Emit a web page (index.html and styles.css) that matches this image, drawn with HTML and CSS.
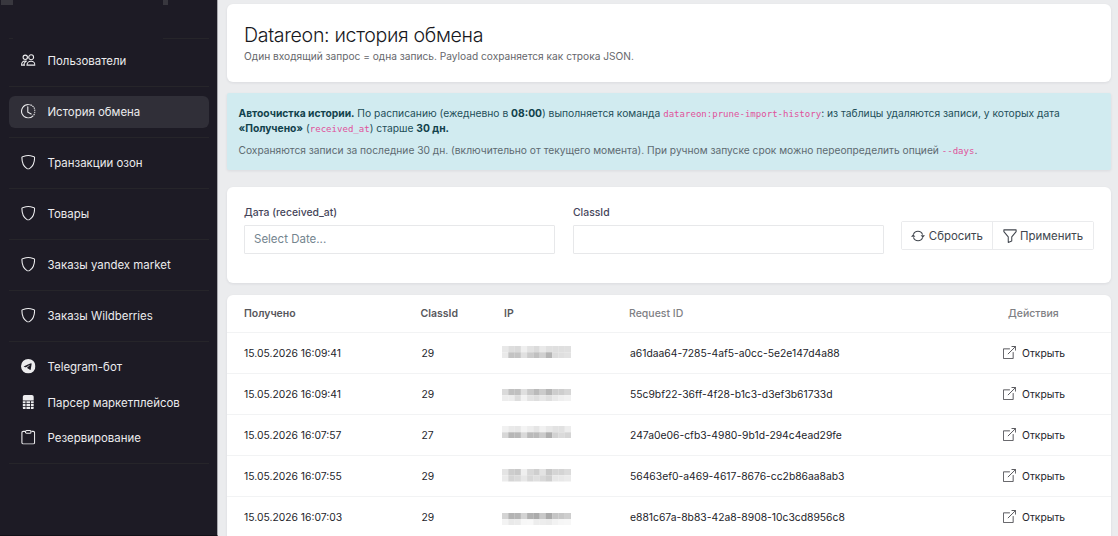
FILE: index.html
```html
<!DOCTYPE html>
<html lang="ru">
<head>
<meta charset="utf-8">
<title>Datareon: история обмена</title>
<link rel="stylesheet" href="styles.css">
</head>
<body>
<svg class="sprite" aria-hidden="true">
  <symbol id="people" viewBox="0 0 16 16"><g fill="none" stroke="currentColor" stroke-width="1.200"><circle cx="4.700" cy="4.700" r="2.400"/><circle cx="11.200" cy="4.700" r="2.700"/><path d="M6.600 13.400h8.800c0-2.600-1.600-4.300-4.300-4.300s-4.500 1.700-4.500 4.300zM6.400 9.200C5.900 8.900 5.300 8.800 4.700 8.800 2 8.800.6 10.800.6 13.400h3.800M3 13.400c.2-2 1.200-3.600 2.900-4.400"/></g></symbol>
  <symbol id="clock" viewBox="0 0 16 16"><g fill="none" stroke="currentColor" stroke-width="1.200"><path d="M8 .6a7.400 7.400 0 1 0 5.300 12.600"/><path d="M8 .6a7.400 7.400 0 0 1 5.300 12.600" stroke-dasharray="1.600 .8"/><path d="M7.500 3v6l3.700 2.100" stroke-linecap="round"/></g></symbol>
  <symbol id="shield" viewBox="0 0 16 16"><path d="M8 .6C6.500.6 3.500 1.400 1.600 2c-.4.100-.6.400-.6.800 0 5 .6 9.200 5.600 12.200.6.400 1 .5 1.400.5s.8-.1 1.400-.5C14.400 12 15 7.800 15 2.800c0-.4-.2-.7-.6-.8C12.500 1.400 9.500.6 8 .6z" fill="none" stroke="currentColor" stroke-width="1.200"/></symbol>
  <symbol id="telegram" viewBox="0 0 16 16"><path fill="currentColor" fill-rule="evenodd" d="M16 8A8 8 0 1 1 0 8a8 8 0 0 1 16 0zM8.287 5.906c-.778.324-2.334.994-4.666 2.010-.378.150-.577.298-.595.442-.030.243.275.339.690.470l.175.055c.408.133.958.288 1.243.294.260.006.549-.100.868-.320 2.179-1.471 3.304-2.214 3.374-2.230.050-.012.120-.026.166.016.047.041.042.120.037.141-.030.129-1.227 1.241-1.846 1.817-.193.180-.330.307-.358.336a8 8 0 0 1-.188.186c-.380.366-.664.640.015 1.088.327.216.589.393.850.571.284.194.568.387.936.629.093.060.183.125.270.187.331.236.630.448.997.414.214-.020.435-.220.547-.820.265-1.417.786-4.486.906-5.751a1.400 1.400 0 0 0-.013-.315.340.340 0 0 0-.114-.217.530.530 0 0 0-.310-.093c-.300.005-.763.166-2.984 1.090"/></symbol>
  <symbol id="calc" viewBox="0 0 16 16"><path fill="currentColor" d="M4 0h8a2 2 0 0 1 2 2v4H2V2a2 2 0 0 1 2-2zM2 7h3v2H2zm4 0h4v2H6zm5 0h3v2h-3zM2 10h3v2H2zm4 0h4v2H6zm5 0h3v2h-3zM2 13h3v3H4a2 2 0 0 1-2-2zm4 0h4v3H6zm5 0h3v1a2 2 0 0 1-2 2h-1z"/></symbol>
  <symbol id="clipboard" viewBox="0 0 16 16"><g fill="none" stroke="currentColor" stroke-width="1.200"><path d="M4.500 1.500h-2A1.500 1.500 0 0 0 1 3v11a1.500 1.500 0 0 0 1.500 1.400h11A1.500 1.500 0 0 0 15 14V3a1.500 1.500 0 0 0-1.500-1.500h-2"/><rect x="5" y=".6" width="6" height="3" rx="1.200"/></g></symbol>
  <symbol id="refresh" viewBox="0 0 16 16"><path d="M2.700 6.500a5.500 5.500 0 0 1 10.500 0M13.300 9.500a5.500 5.500 0 0 1-10.500 0" fill="none" stroke="currentColor" stroke-width="1.200"/><path fill="currentColor" d="M11 7.200h5L13.500 10zM0 8.800h5L2.500 6z"/></symbol>
  <symbol id="funnel" viewBox="0 0 16 16"><path d="M1 1h14v2L10 9v4.800L6 15.300V9L1 3z" fill="none" stroke="currentColor" stroke-width="1.200" stroke-linejoin="round"/></symbol>
  <symbol id="open" viewBox="0 0 16 16"><path d="M8.500 3.500h-8v12h12v-8M10.500.6h5v5M15.500.6L6 10" fill="none" stroke="currentColor" stroke-width="1.200"/></symbol>
</svg>
<div class="app">
  <aside class="sidebar">
    <div class="brand"><i class="chip"></i><i class="chip chip-small"></i></div>
    <nav class="nav">
      <a class="item"><svg class="icon"><use href="#people"/></svg>Пользователи</a>
      <hr class="rule">
      <a class="item active"><svg class="icon"><use href="#clock"/></svg>История обмена</a>
      <hr class="rule">
      <a class="item"><svg class="icon"><use href="#shield"/></svg>Транзакции озон</a>
      <hr class="rule">
      <a class="item"><svg class="icon"><use href="#shield"/></svg>Товары</a>
      <hr class="rule">
      <a class="item"><svg class="icon"><use href="#shield"/></svg>Заказы yandex market</a>
      <hr class="rule">
      <a class="item"><svg class="icon"><use href="#shield"/></svg>Заказы Wildberries</a>
      <hr class="rule">
      <a class="item tight"><svg class="icon"><use href="#telegram"/></svg>Telegram-бот</a>
      <a class="item tight"><svg class="icon"><use href="#calc"/></svg>Парсер маркетплейсов</a>
      <a class="item"><svg class="icon"><use href="#clipboard"/></svg>Резервирование</a>
      <hr class="rule">
    </nav>
  </aside>
  <main class="main">
    <header class="card heading">
      <h1 class="title">Datareon: история обмена</h1>
      <p class="lead">Один входящий запрос = одна запись. Payload сохраняется как строка JSON.</p>
    </header>
    <section class="alert">
      <p class="alert-text"><b>Автоочистка истории.</b> По расписанию (ежедневно в <b>08:00</b>) выполняется команда <code>datareon:prune-import-history</code>: из таблицы удаляются записи, у которых дата<br><b>«Получено»</b> (<code>received_at</code>) старше <b>30 дн.</b></p>
      <p class="alert-note">Сохраняются записи за последние 30 дн. (включительно от текущего момента). При ручном запуске срок можно переопределить опцией <code>--days</code>.</p>
    </section>
    <form class="card filters">
      <label class="field"><span class="label">Дата (received_at)</span><input class="input" placeholder="Select Date..."></label>
      <label class="field"><span class="label">ClassId</span><input class="input"></label>
      <div class="buttons">
        <button class="btn btn-reset" type="button"><svg class="btn-icon"><use href="#refresh"/></svg>Сбросить</button>
        <button class="btn" type="button"><svg class="btn-icon"><use href="#funnel"/></svg>Применить</button>
      </div>
    </form>
    <section class="card table">
      <div class="row head"><span>Получено</span><span class="cls">ClassId</span><span class="iph">IP</span><span class="muted req">Request ID</span><span class="muted act">Действия</span></div>
      <div class="row"><span>15.05.2026 16:09:41</span><span>29</span><svg class="ip ip1" viewBox="0 0 11 2" preserveAspectRatio="none" data-cells="e8dddaefe2dbe9e0dfdfe0 eac3c4e0cbc0d0b4dcdfe2"></svg><span class="uuid">a61daa64-7285-4af5-a0cc-5e2e147d4a88</span><a class="open"><svg class="open-icon"><use href="#open"/></svg>Открыть</a></div>
      <div class="row"><span>15.05.2026 16:09:41</span><span>29</span><svg class="ip ip2" viewBox="0 0 11 2" preserveAspectRatio="none" data-cells="dac0c0dfc9bacbb6cdced6 ededddf2e3dee7dfe9eff2"></svg><span class="uuid">55c9bf22-36ff-4f28-b1c3-d3ef3b61733d</span><a class="open"><svg class="open-icon"><use href="#open"/></svg>Открыть</a></div>
      <div class="row"><span>15.05.2026 16:07:57</span><span>27</span><svg class="ip ip3" viewBox="0 0 11 2" preserveAspectRatio="none" data-cells="f1e9e7f4ede5f1e8e2e1ed d7b6b8d9babacbaed2dad5"></svg><span class="uuid">247a0e06-cfb3-4980-9b1d-294c4ead29fe</span><a class="open"><svg class="open-icon"><use href="#open"/></svg>Открыть</a></div>
      <div class="row"><span>15.05.2026 16:07:55</span><span>29</span><svg class="ip ip4" viewBox="0 0 11 2" preserveAspectRatio="none" data-cells="e4cdc9efd8cfe3c8d5d4db ebd5dae7d8dfd8cfe7e8eb"></svg><span class="uuid">56463ef0-a469-4617-8676-cc2b86aa8ab3</span><a class="open"><svg class="open-icon"><use href="#open"/></svg>Открыть</a></div>
      <div class="row"><span>15.05.2026 16:07:03</span><span>29</span><svg class="ip ip5" viewBox="0 0 11 2" preserveAspectRatio="none" data-cells="d4b3b5d3b1abc9aac5c7ce f3e9ebf7f8ededebf2f6f7"></svg><span class="uuid">e881c67a-8b83-42a8-8908-10c3cd8956c8</span><a class="open"><svg class="open-icon"><use href="#open"/></svg>Открыть</a></div>
    </section>
  </main>
</div>
<script src="mask.js"></script>
</body>
</html>
```
FILE: styles.css
```css
* { box-sizing: border-box; }
body { margin: 0; background: #ebecee; font-family: Inter, "Noto Sans", sans-serif; color: #23242a; }
.sprite { position: absolute; width: 0; height: 0; }
.app { display: flex; width: 1118px; height: 536px; overflow: hidden; }
.sidebar { flex: none; width: 218px; height: 536px; background: #1d1b25; border-right: 1px solid #a9a9ae; border-bottom: 1px solid #121118; }
.brand { display: flex; height: 39px; margin: 0 8px 6px 9px; background: linear-gradient(90deg, #26252a 4px, transparent 4px 154px, #26252a 154px) bottom / 100% 1px no-repeat; }
.chip { width: 12px; height: 5px; margin-left: -8px; background: #38373e; }
.chip-small { width: 5px; margin-left: 150px; }
.nav { display: flex; flex-direction: column; padding: 0 8px 0 9px; }
.item { display: flex; align-items: center; height: 32px; padding: 0 0 0 12px; gap: 12px; border-radius: 6px; color: #ececee; font-size: 11.450px; white-space: nowrap; }
.active { background: #302f38; }
.tight { margin-bottom: 3.500px; }
.icon { width: 14.500px; height: 14.500px; margin-top: -1px; }
.rule { width: 100%; height: 1px; margin: 9px 0; border: 0; background: #26252a; }
.main { flex: 1; display: flex; flex-direction: column; padding: 3.500px 8px 0 8.500px; }
.card { flex: none; background: #fff; border-radius: 6px; box-shadow: 0 1px 3px rgba(30,30,50,.08); }
.heading { height: 78px; padding: 19px 17.500px; margin-bottom: 11.500px; }
.title { margin: 0; font-size: 19.600px; line-height: 24px; font-weight: 300; color: #18181d; letter-spacing: -.34px; }
.lead { margin: 2px 0 0; font-size: 10.170px; line-height: 15px; color: #66676c; }
.alert { flex: none; height: 77px; margin-bottom: 17px; padding: 12.500px 12px; background: #d1ebf0; border-radius: 2px; box-shadow: 0 1px 3px rgba(30,30,50,.08); color: #234f59; font-size: 10.280px; white-space: nowrap; }
.alert b { font-weight: 700; color: #12424c; }
.alert-text { margin: 0; line-height: 15.500px; }
.alert-note { margin: 6px 0 0; line-height: 15.500px; color: #5d6a71; font-size: 10.220px; }
code { font-family: "DejaVu Sans Mono", monospace; font-size: 9.050px; line-height: 1; color: #e0529b; }
.filters { display: grid; grid-template-columns: 311px 311px 191.500px; column-gap: 18px; height: 96px; padding: 18px 17.500px; margin-bottom: 11.500px; }
.label { display: block; font-size: 10.400px; line-height: 15px; font-weight: 500; color: #45455a; margin-bottom: 5px; }
.input { display: block; width: 100%; height: 28.500px; padding: 0 9px; border: 1px solid #e7e8ea; border-radius: 1px; font: 11.500px Inter, sans-serif; background: #fff; }
.input::placeholder { color: #74858f; opacity: 1; }
.buttons { display: flex; height: 29px; margin: 16px 0 0 -1px; border: 1px solid #eaebed; border-radius: 2px; }
.btn { display: flex; align-items: center; justify-content: center; flex: 1 0 auto; gap: 3.500px; padding: 0 8.500px; border: 0; background: #fff; font: 11.450px Inter, sans-serif; color: #41464e; }
.btn-reset { border-right: 1px solid #eaebed; }
.btn-icon { width: 14px; height: 14px; }
.table { height: 260px; border-radius: 6px 6px 0 0; }
.row { display: grid; grid-template-columns: 177.500px 80.500px 128px 373px 1fr; align-items: center; height: 41px; padding-left: 17.500px; border-bottom: 1px solid #f2f3f4; font-size: 10.340px; white-space: nowrap; }
.head { height: 38px; font-size: 10.500px; font-weight: 600; color: #57575c; }
.head .muted { color: #808084; font-weight: 500; }
.cls { margin-left: -1px; }
.iph { margin-left: 2px; }
.req { margin-left: -1px; }
.act { margin-left: 5px; }
.ip { width: 69px; height: 12.500px; }
.ip1 { margin-top: -1.500px; }
.ip2 { margin-top: 3px; }
.ip3 { margin-top: -5px; }
.ip5 { margin-top: 5px; }
.open { display: flex; align-items: center; gap: 6px; }
.open-icon { width: 13px; height: 13px; color: #55555a; }
```
FILE: mask.js
```js
// Fills each masked address with its two rows of grey cells.
document.querySelectorAll('.ip').forEach(svg => {
  svg.dataset.cells.split(' ').forEach((line, y) => {
    line.match(/../g).forEach((grey, x) => {
      const cell = document.createElementNS('http://www.w3.org/2000/svg', 'rect');
      cell.setAttribute('x', x);
      cell.setAttribute('y', y);
      cell.setAttribute('width', 1.02);
      cell.setAttribute('height', 1);
      cell.setAttribute('fill', '#' + grey.repeat(3));
      svg.append(cell);
    });
  });
});
```
